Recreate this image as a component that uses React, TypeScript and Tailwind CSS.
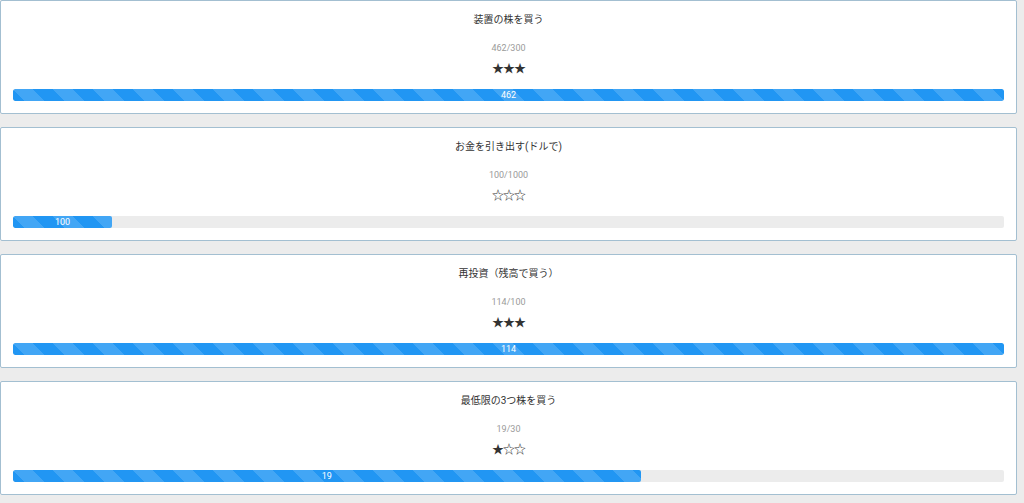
import React from 'react';

interface Mission {
  title: string;
  current: number;
  goal: number;
  stars: number;
}

const missions: Mission[] = [
  { title: '装置の株を買う', current: 462, goal: 300, stars: 3 },
  { title: 'お金を引き出す(ドルで)', current: 100, goal: 1000, stars: 0 },
  { title: '再投資（残高で買う）', current: 114, goal: 100, stars: 3 },
  { title: '最低限の3つ株を買う', current: 19, goal: 30, stars: 1 },
];

const MissionCard: React.FC<{ mission: Mission }> = ({ mission }) => {
  const pct = Math.min(100, (mission.current / mission.goal) * 100);
  return (
    <div className="bg-white border border-[#a3bfd1] rounded-[2px] pt-[13px] pb-[12px] px-[12px] text-center">
      <div className="text-[10px] leading-[12px] text-[#333]">{mission.title}</div>
      <div className="mt-[16px] text-[9px] leading-[12px] text-[#9a9a9a]">
        {mission.current}/{mission.goal}
      </div>
      {/* star rating */}
      <div className="mt-[7px] text-[12px] leading-[14px] text-[#333] tracking-[-1px] [font-family:'Noto_Sans_CJK_JP',sans-serif]">
        {[0, 1, 2].map((i) => (
          <span key={i}>{i < mission.stars ? '★' : '☆'}</span>
        ))}
      </div>
      <div className="mt-[14px] h-[12px] bg-[#ececec] rounded-[2px] overflow-hidden flex">
        <div
          className="h-full bg-[#2196f3] bg-[linear-gradient(45deg,rgba(255,255,255,.15)_25%,transparent_25%,transparent_50%,rgba(255,255,255,.15)_50%,rgba(255,255,255,.15)_75%,transparent_75%,transparent)] bg-[length:40px_40px] rounded-[2px] text-white text-[9px] leading-[12px] text-center"
          style={{ width: `${pct}%` }}
        >
          {mission.current}
        </div>
      </div>
    </div>
  );
};

export default function App() {
  return (
    <div
      className="min-h-screen bg-[#ececec] pr-[7px]"
      style={{ fontFamily: 'Roboto, "Noto Sans CJK JP", sans-serif' }}
    >
      <div className="flex flex-col gap-[13px]">
        {missions.map((m, i) => (
          <MissionCard key={i} mission={m} />
        ))}
      </div>
    </div>
  );
}
